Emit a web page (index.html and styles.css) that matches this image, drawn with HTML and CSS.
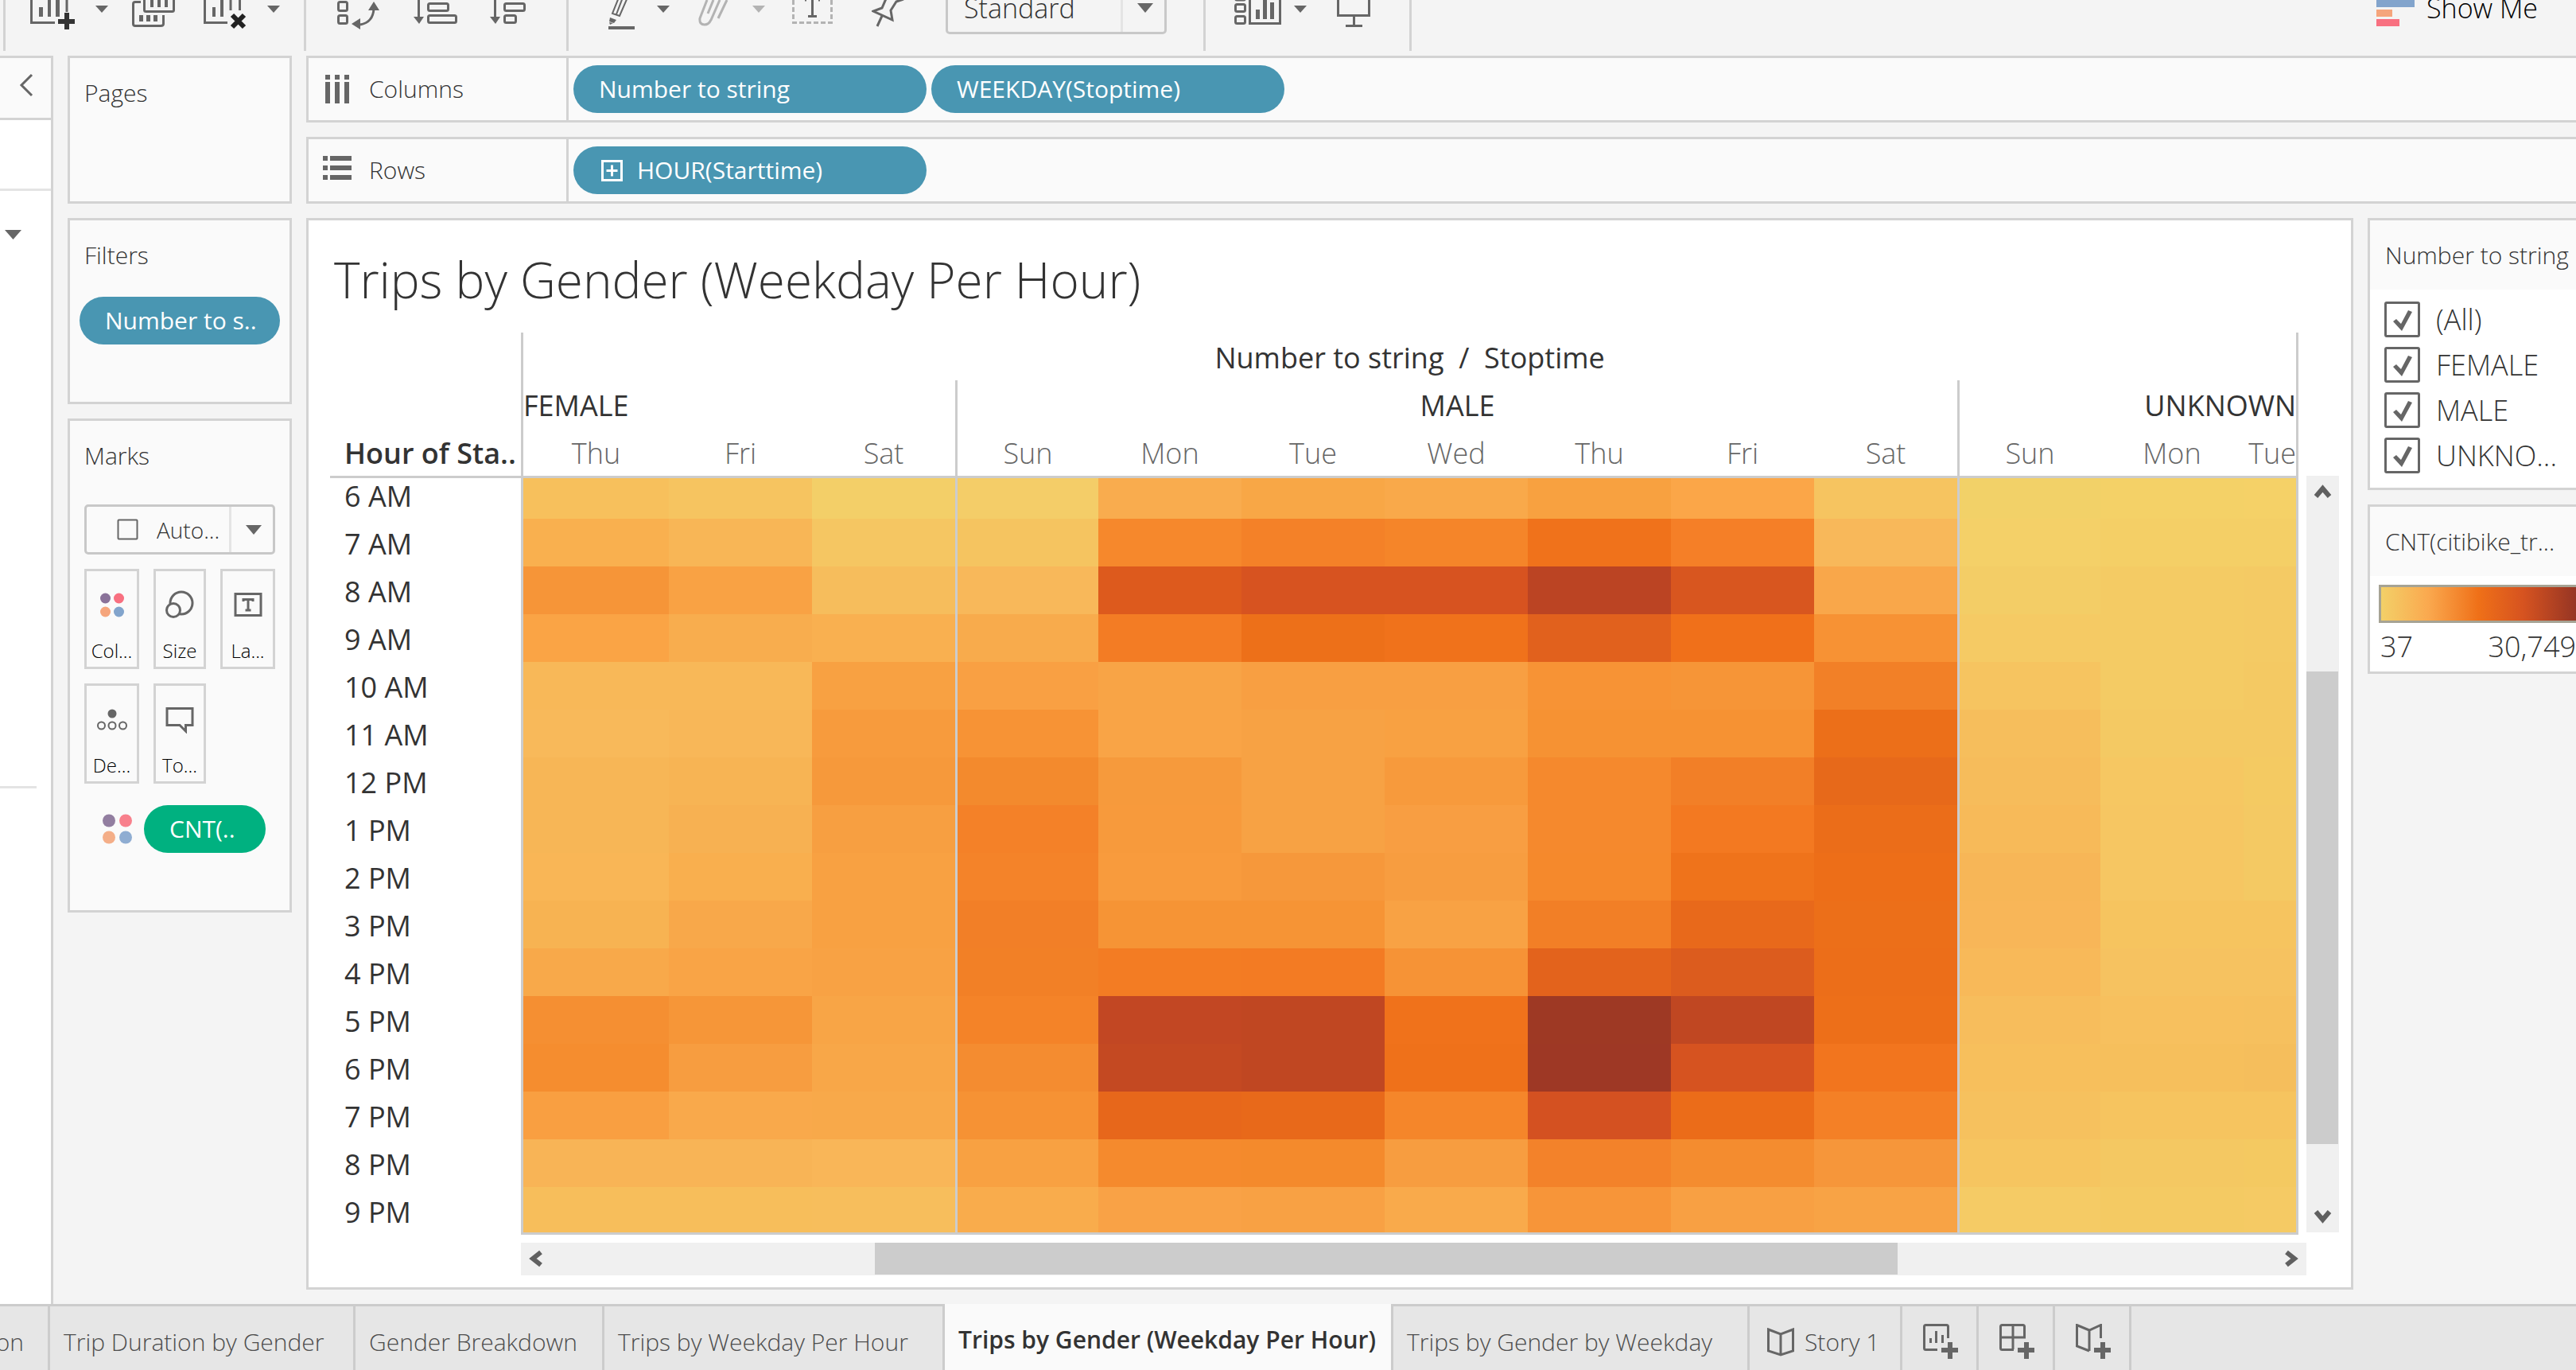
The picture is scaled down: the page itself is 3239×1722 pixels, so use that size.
FILE: index.html
```html
<!DOCTYPE html>
<html lang="en">
<head>
<meta charset="utf-8">
<title>Trips by Gender (Weekday Per Hour)</title>
<link rel="stylesheet" href="styles.css">
</head>
<body>
<header class="toolbar">
  <div class="tool-group group-sheet">
    <button class="tool" aria-label="New worksheet"><svg width="58" height="40" viewBox="0 0 58 40"><path d="M1.500 0V28.500H31M46 0V15" class="ln"/><path d="M11 9h5v12h-5zM22 0h4v21h-4zM32 0h5v21h-5z" class="fl"/><path d="M43 16h6v8h7v6h-7v7h-6v-7h-8v-6h8z" fill="#333"/></svg></button>
    <button class="tool" aria-label="New worksheet menu"><svg width="22" height="40" viewBox="0 0 22 40"><path d="M0 7h16l-8 9z" class="fl"/></svg></button>
    <button class="tool" aria-label="Duplicate"><svg width="66" height="40" viewBox="0 0 66 40"><path d="M15.500 0V12.500Q15.500 14.500 17.500 14.500H50.500Q52.500 14.500 52.500 12.500V0M11 2.500H4Q1.500 2.500 1.500 5V30Q1.500 32.500 4 32.500H36Q39.500 32.500 39.500 30V19" class="ln"/><path d="M23 0h4v9h-4zM32 0h4v9h-4zM41 0h4v9h-4zM9 19h5v8h-5zM18 19h5v8h-5zM27 19h5v8h-5z" class="fl"/></svg></button>
    <button class="tool" aria-label="Clear sheet"><svg width="56" height="40" viewBox="0 0 56 40"><path d="M1.500 0V28.500H30M34 0V13M45.500 0V13" class="ln"/><path d="M11 9h4v12h-4zM21 0h4v21h-4z" class="fl"/><path d="M36 19L51 34M51 19L36 34" stroke="#222" stroke-width="6"/></svg></button>
    <button class="tool" aria-label="Clear sheet menu"><svg width="22" height="40" viewBox="0 0 22 40"><path d="M0 7h16l-8 9z" class="fl"/></svg></button>
  </div>
  <div class="tool-group group-sort">
    <button class="tool" aria-label="Swap rows and columns"><svg width="56" height="40" viewBox="0 0 56 40"><rect x="2.500" y="2.500" width="11" height="11" rx="2" class="ln"/><rect x="2.500" y="19.500" width="11" height="10" rx="2" class="ln"/><path d="M47 11Q46 28 30 31" class="ln"/><path d="M47 2l7 11H40zM19 30l11-7v14z" class="fl"/></svg></button>
    <button class="tool" aria-label="Sort ascending"><svg width="56" height="40" viewBox="0 0 56 40"><path d="M7.500 0V22" class="ln"/><path d="M1 21h13l-6 9z" class="fl"/><rect x="19.500" y="4.500" width="25" height="9" rx="2" class="ln"/><rect x="19.500" y="19.500" width="35" height="9" rx="2" class="ln"/></svg></button>
    <button class="tool" aria-label="Sort descending"><svg width="56" height="40" viewBox="0 0 56 40"><path d="M7.500 0V22" class="ln"/><path d="M1 21h13l-6 9z" class="fl"/><rect x="19.500" y="4.500" width="25" height="9" rx="2" class="ln"/><rect x="19.500" y="19.500" width="14" height="9" rx="2" class="ln"/></svg></button>
  </div>
  <div class="tool-group group-format">
    <button class="tool" aria-label="Highlight"><svg width="33" height="40" viewBox="0 0 33 40"><path d="M13 -3L5 17L14 20L24 -3M18 -3L10 18" class="ln" stroke-width="2"/><path d="M2 22l8 3-3 4-6-2zM1 28l5 1-4 2zM0 33h33v4H0z" class="fl"/></svg></button>
    <button class="tool" aria-label="Highlight menu"><svg width="24" height="40" viewBox="0 0 24 40"><path d="M0 7h16l-8 9z" class="fl"/></svg></button>
    <button class="tool" disabled aria-label="Group members"><svg width="40" height="40" viewBox="0 0 40 40"><path d="M11 0L2 23Q1 31 8 31Q13 31 16 25L27 0M12 17L19 0M25 23L36 0M27 0" fill="none" stroke="#b3b3b3" stroke-width="3"/></svg></button>
    <button class="tool" disabled aria-label="Group menu"><svg width="22" height="40" viewBox="0 0 22 40"><path d="M0 7h16l-8 9z" fill="#b3b3b3"/></svg></button>
    <button class="tool" aria-label="Show mark labels"><svg width="72" height="40" viewBox="0 0 72 40"><path d="M1.500 0V28.500H49.500V0" fill="none" stroke="#b3b3b3" stroke-width="3" stroke-dasharray="6 3"/><path d="M25.500 0V20M20 20.500H31M16 0h2M33 0h2" class="ln"/></svg></button>
    <button class="tool" aria-label="Fix axes"><svg width="65" height="40" viewBox="0 0 65 40"><path d="M20 -6L13 10L2 14L26 25L24 13L31 2L40 -1M13 20L7 33" class="ln"/></svg></button>
    <span class="picker fit-picker">
      <select aria-label="Fit"><option>Standard</option></select>
      <svg class="picker-arrow" width="20" height="12" viewBox="0 0 20 12"><path d="M0 0h20L10 12z" class="fl"/></svg>
    </span>
  </div>
  <div class="tool-group group-view">
    <button class="tool" aria-label="Show or hide cards"><svg width="59" height="40" viewBox="0 0 59 40"><rect x="1.500" y="-8" width="12" height="8" rx="2" class="ln"/><rect x="1.500" y="5.500" width="12" height="9" rx="2" class="ln"/><rect x="1.500" y="20.500" width="12" height="9" rx="2" class="ln"/><path d="M19.500 0V29.500H57.500V0" class="ln"/><path d="M27 12h5v12h-5zM36 0h5v24h-5zM45 3h5v21h-5z" class="fl"/></svg></button>
    <button class="tool" aria-label="Cards menu"><svg width="38" height="40" viewBox="0 0 38 40"><path d="M0 7h16l-8 9z" class="fl"/></svg></button>
    <button class="tool" aria-label="Presentation mode"><svg width="43" height="40" viewBox="0 0 43 40"><path d="M1.500 0V19.500H40.500V0M21.500 20V32M11 32.500H32" class="ln"/></svg></button>
  </div>
  <button class="show-me"><svg width="48" height="34" viewBox="0 0 48 34"><path d="M0 0h48v9H0z" fill="#82a4cc"/><path d="M0 12h20v9H0z" fill="#f5a57c"/><path d="M0 24h29v9H0z" fill="#f87080"/></svg>Show Me</button>
</header>

<div class="workspace">
  <aside class="data-pane">
    <div class="pane-head"><button class="tool" aria-label="Collapse pane"><svg width="64" height="75" viewBox="0 0 64 75"><path d="M40 21L27 34L40 47" class="ln"/></svg></button></div>
    <div class="pane-search"></div>
    <div class="pane-fields"><svg width="32" height="12" viewBox="0 0 32 12"><path d="M6 0h21L16.500 12z" class="fl"/></svg></div>
    <div class="pane-params"></div>
  </aside>

  <div class="cards">
    <section class="card pages"><h2>Pages</h2></section>
    <section class="card filters"><h2>Filters</h2><button class="pill">Number to s..</button></section>
    <section class="card marks">
      <h2>Marks</h2>
      <span class="picker mark-picker">
        <select aria-label="Mark type"><option>Auto...</option></select>
        <svg class="picker-square" width="27" height="27" viewBox="0 0 27 27"><rect x="1.500" y="1.500" width="24" height="24" rx="1" class="ln" stroke-width="2"/></svg>
        <svg class="picker-arrow" width="20" height="12" viewBox="0 0 20 12"><path d="M0 0h20L10 12z" class="fl"/></svg>
      </span>
      <div class="mark-grid">
        <button class="mark"><svg width="40" height="36" viewBox="0 0 40 36"><circle cx="11.500" cy="10" r="6.500" fill="#8a7299"/><circle cx="28.500" cy="10" r="6.500" fill="#f87080"/><circle cx="11.500" cy="27" r="6.500" fill="#f5a57c"/><circle cx="28.500" cy="27" r="6.500" fill="#82a4cc"/></svg>Col...</button>
        <button class="mark"><svg width="40" height="36" viewBox="0 0 40 36"><circle cx="22" cy="16" r="14" class="ln"/><circle cx="12" cy="25" r="8.500" fill="#fafafa" stroke="#666" stroke-width="3"/></svg>Size</button>
        <button class="mark"><svg width="40" height="36" viewBox="0 0 40 36"><rect x="4" y="4.500" width="32" height="27" class="ln"/><path d="M14 14V11.500H26V14M20 11.500V25M16.500 25H23.500" class="ln"/></svg>La...</button>
        <button class="mark"><svg width="40" height="36" viewBox="0 0 40 36"><circle cx="20" cy="11" r="5.500" class="fl"/><circle cx="6.500" cy="26" r="4.500" class="ln" stroke-width="2"/><circle cx="20" cy="26" r="4.500" class="ln" stroke-width="2"/><circle cx="33.500" cy="26" r="4.500" class="ln" stroke-width="2"/></svg>De...</button>
        <button class="mark"><svg width="40" height="36" viewBox="0 0 40 36"><path d="M4 4.500H36V25.500H27.500V33L20 25.500H4Z" class="ln"/></svg>To...</button>
      </div>
      <div class="encoding">
        <svg width="40" height="40" viewBox="0 0 40 40"><circle cx="10" cy="9.500" r="8" fill="#927ea0"/><circle cx="31" cy="9.500" r="8" fill="#f8808c"/><circle cx="10" cy="30.500" r="8" fill="#f4ae88"/><circle cx="31" cy="30.500" r="8" fill="#8fadd2"/></svg>
        <button class="pill measure">CNT(..</button>
      </div>
    </section>
  </div>

  <main class="sheet">
    <section class="shelf">
      <h2><svg width="36" height="37" viewBox="0 0 36 37"><path d="M3 0h6v6H3zM15 0h6v6h-6zM27 0h6v6h-6zM3 9h6v27H3zM15 9h6v27h-6zM27 9h6v27h-6z" class="fl"/></svg>Columns</h2>
      <button class="pill">Number to string</button>
      <button class="pill">WEEKDAY(Stoptime)</button>
    </section>
    <section class="shelf">
      <h2><svg width="36" height="37" viewBox="0 0 36 37"><path d="M0 0h6v6H0zM9 0h27v6H9zM0 12h6v6H0zM9 12h27v6H9zM0 24h6v6H0zM9 24h27v6H9z" class="fl"/></svg>Rows</h2>
      <button class="pill"><svg width="30" height="27" viewBox="0 0 30 27"><path d="M4.500 1.500h24v24h-24zM16.500 6.500v14M9.500 13.500h14" fill="none" stroke="#fff" stroke-width="3"/></svg>HOUR(Starttime)</button>
    </section>

    <div class="view-row">
      <section class="viz">
        <h1>Trips by Gender (Weekday Per Hour)</h1>
        <div class="viz-body">
          <table class="heatmap">
            <colgroup><col class="c-hour"><col class="c-first"><col span="11" class="c-day"><col class="c-last"></colgroup>
            <thead>
              <tr><td></td><th colspan="13" class="start end">Number to string &nbsp;/&nbsp; Stoptime</th></tr>
              <tr><td></td><th colspan="3" class="start female">FEMALE</th><th colspan="7" class="start">MALE</th><th colspan="3" class="start end unknown">UNKNOWN</th></tr>
              <tr class="days"><th class="corner">Hour of Sta..</th><th class="start">Thu</th><th>Fri</th><th>Sat</th><th class="start">Sun</th><th>Mon</th><th>Tue</th><th>Wed</th><th>Thu</th><th>Fri</th><th>Sat</th><th class="start">Sun</th><th>Mon</th><th class="end">Tue</th></tr>
            </thead>
            <tbody id="hours"></tbody>
          </table>
          <div class="scroll-y">
            <svg width="40" height="40" viewBox="0 0 40 40"><path d="M12 26L20.500 16L29 26" class="chev"/></svg>
            <div class="thumb"></div>
            <svg width="40" height="40" viewBox="0 0 40 40"><path d="M12 14L20.500 24L29 14" class="chev"/></svg>
          </div>
          <div class="scroll-x">
            <svg width="40" height="40" viewBox="0 0 40 40"><path d="M25 12L15 20L25 28" class="chev"/></svg>
            <div class="thumb"></div>
            <svg width="40" height="40" viewBox="0 0 40 40"><path d="M15 12L25 20L15 28" class="chev"/></svg>
          </div>
        </div>
      </section>

      <aside class="legends">
        <section class="legend">
          <h2>Number to string</h2>
          <div class="options">
            <label><input type="checkbox" checked>(All)</label>
            <label><input type="checkbox" checked>FEMALE</label>
            <label><input type="checkbox" checked>MALE</label>
            <label><input type="checkbox" checked>UNKNO...</label>
          </div>
        </section>
        <section class="legend">
          <h2>CNT(citibike_tr...</h2>
          <div class="ramp"></div>
          <div class="ramp-range"><span>37</span><span>30,749</span></div>
        </section>
      </aside>
    </div>
  </main>
</div>

<nav class="tabs">
  <button class="tab cut">on</button>
  <button class="tab">Trip Duration by Gender</button>
  <button class="tab">Gender Breakdown</button>
  <button class="tab">Trips by Weekday Per Hour</button>
  <button class="tab active">Trips by Gender (Weekday Per Hour)</button>
  <button class="tab">Trips by Gender by Weekday</button>
  <button class="tab story"><svg width="34" height="36" viewBox="0 0 34 36"><path d="M1.500 2L17 8L32.500 2V29L17 34L1.500 29ZM17 8V34" class="ln"/></svg>Story 1</button>
  <button class="tab add" aria-label="New worksheet"><svg width="46" height="46" viewBox="0 0 46 46"><path d="M18 32.500H3.500Q1.500 32.500 1.500 30.500V3.500Q1.500 1.500 3.500 1.500H29.500Q31.500 1.500 31.500 3.500V18M9.500 18V24M16.500 9V24M24.500 14V24" class="ln"/><path d="M31 23h6v7h7v6h-7v8h-6v-8h-8v-6h8z" class="fl"/></svg></button>
  <button class="tab add" aria-label="New dashboard"><svg width="46" height="46" viewBox="0 0 46 46"><path d="M18 32.500H3.500Q1.500 32.500 1.500 30.500V3.500Q1.500 1.500 3.500 1.500H29.500Q31.500 1.500 31.500 3.500V17H1.500M17 2V32" class="ln"/><path d="M31 23h6v7h7v6h-7v8h-6v-8h-8v-6h8z" class="fl"/></svg></button>
  <button class="tab add" aria-label="New story"><svg width="46" height="46" viewBox="0 0 46 46"><path d="M17 34L1.500 28V1.500L17 8L31.500 1.500V18M17 8V34" class="ln"/><path d="M31 23h6v7h7v6h-7v8h-6v-8h-8v-6h8z" class="fl"/></svg></button>
</nav>
<script src="heatmap.js"></script>
</body>
</html>
```
FILE: styles.css
```css
* { box-sizing: border-box; }

body {
  margin: 0;
  height: 100vh;
  display: flex;
  flex-direction: column;
  overflow: hidden;
  background: #f4f4f4;
  color: #333;
  font: 300 30px/40px "Open Sans", "Noto Sans", sans-serif;
}

h1, h2 { margin: 0; font-weight: 300; }
h2 { font-size: 30px; }
button { font: inherit; color: inherit; border: 0; padding: 0; background: none; text-align: left; white-space: nowrap; }
svg { display: block; flex: none; overflow: hidden; }
.ln { fill: none; stroke: #666; stroke-width: 3; }
.ln[stroke-width="2"] { stroke-width: 2; }
.fl { fill: #666; }
.chev { fill: none; stroke: #606060; stroke-width: 6; }

/* Toolbar */
.toolbar { flex: none; height: 70px; display: flex; align-items: flex-start; padding-left: 4px; overflow: hidden; }
.tool-group { display: flex; align-items: flex-start; height: 64px; border-left: 3px solid #d3d3d3; }
.group-sheet { gap: 24px; padding: 0 24px 0 31px; }
.group-sort { gap: 40px; padding: 0 41px 0 38px; }
.group-format { gap: 28px; padding: 0 46px 0 50px; }
.group-view { gap: 16px; padding: 0 48px 0 36px; border-right: 3px solid #d3d3d3; }
.tool { display: block; }
.show-me { margin: -10px 48px 0 auto; display: flex; gap: 15px; color: #000; font-size: 34px; }
.show-me svg { margin-top: 10px; }

.picker { display: grid; align-items: center; }
.picker select {
  grid-area: 1 / 1;
  appearance: none;
  font: inherit;
  color: #333;
  border: 3px solid #c8c8c8;
  border-radius: 5px;
  background: linear-gradient(#e4e4e4, #e4e4e4) no-repeat right 52px top / 3px 100%;
}
.picker svg { grid-area: 1 / 1; pointer-events: none; }
.picker-arrow { justify-self: end; margin-right: 17px; }
.fit-picker { width: 278px; margin-top: -24px; }
.fit-picker select { height: 67px; padding: 0 0 0 20px; font-size: 34px; }

/* Workspace */
.workspace { flex: 1; min-height: 0; display: flex; gap: 18px; }

.data-pane { flex: none; width: 67px; display: flex; flex-direction: column; background: #fff; border-right: 3px solid #d3d3d3; }
.pane-head { height: 81px; background: #fafafa; border: solid #d3d3d3; border-width: 3px 0; }
.pane-search { height: 89px; border-bottom: 3px solid #e4e4e4; }
.pane-fields { height: 751px; padding-top: 49px; margin-right: 18px; border-bottom: 3px solid #e4e4e4; }

.cards { flex: none; width: 282px; display: flex; flex-direction: column; gap: 18px; }
.card { border: 3px solid #d3d3d3; background: #fafafa; padding: 24px 18px; }
.pages { height: 186px; }
.filters { height: 234px; }
.marks { height: 621px; }

.pill {
  display: flex;
  align-items: center;
  gap: 18px;
  height: 60px;
  padding: 0 32px;
  border-radius: 30px;
  background: #4996b2;
  color: #fff;
  font-size: 30px;
  font-weight: 500;
}
.filters .pill { width: 252px; margin: 32px -6px 0; }

.mark-picker { margin-top: 41px; font-size: 28px; }
.mark-picker select { height: 63px; padding: 0 0 0 88px; }
.picker-square { margin-left: 41px; }
.mark-grid { display: grid; grid-template-columns: 69px 66px 69px; justify-content: space-between; gap: 18px 0; margin-top: 18px; }
.mark {
  height: 126px;
  border: 3px solid #d3d3d3;
  display: flex;
  flex-direction: column;
  align-items: center;
  justify-content: space-between;
  padding: 24px 0 0;
  color: #000;
  font-size: 24px;
  font-weight: 300;
}
.encoding { display: flex; align-items: center; gap: 14px; margin-top: 27px; padding-left: 21px; }
.measure { width: 153px; background: #00b180; }

.sheet { flex: 1; min-width: 0; display: flex; flex-direction: column; gap: 18px; padding-bottom: 18px; }
.shelf { height: 84px; display: flex; align-items: center; gap: 6px; border: solid #d3d3d3; border-width: 3px 0 3px 3px; background: #fafafa; }
.shelf h2 { width: 327px; align-self: stretch; display: flex; align-items: center; gap: 22px; padding-left: 18px; border-right: 3px solid #d3d3d3; }
.shelf .pill { width: 444px; }

.view-row { flex: 1; min-height: 0; display: flex; gap: 18px; }
.viz { flex: 1; min-width: 0; border: 3px solid #d3d3d3; background: #fff; padding: 34px 15px 0 27px; }
.viz h1 { font-size: 62px; line-height: 80px; padding-left: 5px; margin-bottom: 27px; }

/* Heat map */
.viz-body { display: grid; grid-template-columns: 1fr 41px; column-gap: 10px; row-gap: 10px; }
.heatmap { width: 100%; table-layout: fixed; border-spacing: 0; font-size: 36px; line-height: 40px; }
.c-hour { width: 240px; }
.c-first { width: 186px; }
.c-day { width: 180px; }
.c-last { width: 69px; }
.heatmap th, .heatmap td { padding: 0 0 8px; height: 60px; vertical-align: bottom; font-weight: 500; white-space: nowrap; }
.heatmap .start { border-left: 3px solid #ccc; }
.heatmap .end { border-right: 3px solid #ccc; }
.heatmap .female { text-align: left; }
.heatmap .unknown { text-align: right; }
.heatmap .days th { height: 63px; border-bottom: 3px solid #ccc; font-weight: 300; color: #666; }
.heatmap .days .end { direction: rtl; }
.heatmap .days .corner, .heatmap .hour { text-align: left; padding-left: 18px; font-weight: 600; color: #333; }
.heatmap .hour { font-weight: 400; }
.heatmap tbody tr:first-child > * { height: 51px; }
.heatmap tbody tr:last-child > * { height: 60px; }
.heatmap tbody tr:last-child td { border-bottom: 3px solid #ccc; }

.thumb { background: #ccc; }
.scroll-y { margin: 180px 0 3px; display: flex; flex-direction: column; background: #f0f0f0; }
.scroll-y .thumb { flex: none; height: 594px; margin: 206px 1px auto 0; }
.scroll-x { grid-column: 1 / 3; margin: 0 41px 0 240px; height: 41px; display: flex; background: #f0f0f0; }
.scroll-x .thumb { flex: none; width: 1286px; height: 40px; margin: 0 auto 0 405px; }

/* Legends */
.legends { flex: none; width: 262px; display: flex; flex-direction: column; gap: 18px; white-space: nowrap; }
.legend { border: solid #d3d3d3; border-width: 3px 0 3px 3px; background: #fff; }
.legend h2 { height: 87px; padding: 24px 0 0 19px; background: #fafafa; }
.options { padding: 15px 0 18px 18px; display: grid; gap: 12px; font-size: 36px; }
.options label { display: flex; align-items: center; gap: 20px; height: 45px; }
.options input {
  appearance: none;
  flex: none;
  width: 45px;
  height: 45px;
  margin: 0;
  border: 3px solid #666;
  border-radius: 3px;
}
.options input:checked {
  background: url("data:image/svg+xml,%3Csvg xmlns='http://www.w3.org/2000/svg' width='39' height='39'%3E%3Cpath d='M8 22l4-3 6 6 9-17 5 2-13 24z' fill='%23666'/%3E%3C/svg%3E");
}
.ramp { height: 48px; margin: 11px 0 0 11px; border: solid #a6a394; border-width: 3px 0 3px 3px; background: linear-gradient(90deg, #f3d068, #faa94f 24%, #ef7018 50%, #d65320 73%, #963524); }
.ramp-range { display: flex; justify-content: space-between; padding: 10px 0 11px 13px; font-size: 36px; line-height: 40px; }

/* Sheet tabs */
.tabs { flex: none; height: 83px; display: flex; border-top: 3px solid #ccc; background: #e6e6e6; color: #4d4d4d; font-size: 30px; }
.tab { flex: none; display: flex; align-items: center; padding: 9px 0 0 17px; border-right: 3px solid #ccc; overflow: hidden; }
.tab:nth-child(1) { width: 63px; }
.tab:nth-child(2) { width: 384px; }
.tab:nth-child(3) { width: 313px; }
.tab:nth-child(4) { width: 428px; }
.tab:nth-child(5) { width: 564px; }
.tab:nth-child(6) { width: 448px; }
.tab.cut { justify-content: flex-end; padding-right: 30px; padding-left: 0; }
.tab.active { background: #fafafa; color: #333; font-weight: 600; margin-top: -3px; padding-top: 6px; }
.tab.story { width: 192px; gap: 13px; padding-left: 22px; }
.tab.add { width: 96px; padding-left: 26px; }
```
FILE: heatmap.js
```js
// One entry per hour: label, then the colour of each weekday cell.
const rows = [
  ["6 AM", "f7c05c f6c460 f3cf68 f4cd68 f9ac4e f8a746 f9a94a f8a140 fba648 f6c460 f2d168 f4d167 f5d167"],
  ["7 AM", "f9b04f f8b656 f5c662 f5c460 f6882c f48128 f58529 f0721b f57f27 f8b85a f4d068 f4cf66 f4cf66"],
  ["8 AM", "f69538 f9a244 f6bd5c f8b85a dd5a1d d75320 d75320 bb4423 d8561f f9a74a f3cd66 f4cb64 f4ca64"],
  ["9 AM", "faa445 f8ad4e f9b050 f8ab4c f37c24 ed7019 f0721b e1611d f0701a f79234 f5ca64 f4cb64 f4ca64"],
  ["10 AM", "f8b858 f8b858 f8a142 f9a043 f8a446 f89f42 f89f42 f79335 f69537 f28027 f6c460 f4cb64 f4c963"],
  ["11 AM", "f8b95a f8b758 f79b3d f79335 f9a446 f7a244 f8a142 f69233 f69233 ec6f19 f6be5c f4c963 f4c963"],
  ["12 PM", "f7b656 f7b454 f6993b f38a2d f69a3c f7a244 f79a3c f5892d f27f27 e7691a f6bc5b f6c762 f4ca62"],
  ["1 PM", "f7b656 f7b152 f79f41 f48128 f79a3c f7a244 f89e42 f5892d f37921 eb6d19 f7ba59 f6c662 f4c963"],
  ["2 PM", "f9b656 f9af4e f8a142 f48329 f89b3d f6983b f79d40 f5892c ef731b ed6e18 f7b657 f6c662 f4c963"],
  ["3 PM", "f7b352 f8a84a f8a142 f27f27 f69435 f69435 f8a244 f27f26 e8691b ec6f19 f8b658 f6c45f f6c45f"],
  ["4 PM", "f8a94a f9a446 f8a244 f28026 f37c23 f37b23 f69336 e3631c dc5c1e ec6e19 f8b959 f6c260 f6c260"],
  ["5 PM", "f58f32 f69638 f8a546 f48328 c24723 c04722 f0721b 9e3924 c04722 ed6f19 f7bd5c f7c05e f6c05e"],
  ["6 PM", "f58d2f f79d40 f8a748 f48c30 c44922 c04722 ef711a 9e3825 d65320 f2751e f7bf5c f6bf5c f5be5c"],
  ["7 PM", "f99f41 f9a94b f8a94a f69234 e7671b e8691a f5862a d45121 eb6c19 f48026 f6c15e f6c45f f6c45f"],
  ["8 PM", "f8b456 f8b456 f9b658 f8a142 f58a2d f48a2c f79d40 f3822a f48c2f f6963a f6c560 f4c862 f4c961"],
  ["9 PM", "f7be5b f7be5b f7be5c f9ac4c f9a246 f8a144 f9aa4b f79539 f8a043 f8a345 f5cb65 f4ca63 f5ca64"]
];
const groupStarts = [0, 3, 10];

const body = document.getElementById("hours");
for (const [label, colours] of rows) {
  const tr = body.insertRow();
  const th = document.createElement("th");
  th.className = "hour";
  th.scope = "row";
  th.textContent = label;
  tr.append(th);
  colours.split(" ").forEach((colour, i, all) => {
    const td = tr.insertCell();
    if (groupStarts.includes(i)) td.classList.add("start");
    if (i === all.length - 1) td.classList.add("end");
    td.style.backgroundColor = "#" + colour;
  });
}
```
